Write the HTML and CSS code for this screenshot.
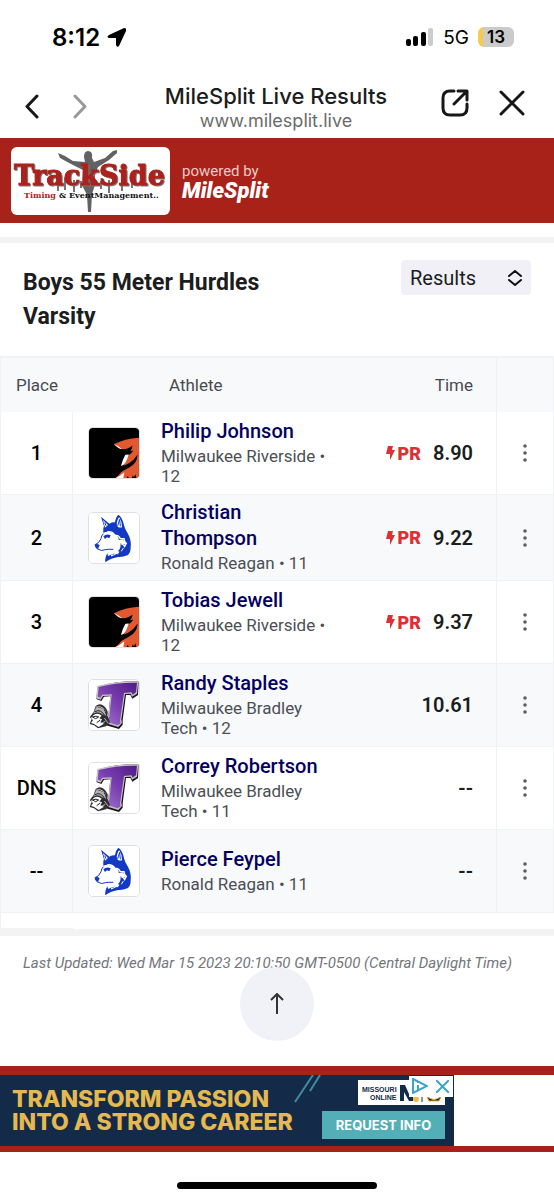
FILE: index.html
```html
<!DOCTYPE html>
<html lang="en">
<head>
    <meta charset="UTF-8">
    <meta name="viewport" content="width=device-width, initial-scale=1.0">
    <title>MileSplit Live Results</title>
    <link rel="stylesheet" href="styles.css">
</head>
<body>
    <!-- Shared logos and icons -->
    <svg class="sprite" aria-hidden="true">
        <defs>
            <linearGradient id="purple" x1="1" y1="0" x2="0" y2="1">
                <stop offset="0" stop-color="#4f1b84"/>
                <stop offset="0.5" stop-color="#7a3db0"/>
                <stop offset="1" stop-color="#a67bd0"/>
            </linearGradient>
        </defs>
        <symbol id="riverside" viewBox="0 0 147 147">
            <rect width="147" height="147" fill="#000"/>
            <path d="M73 48Q105 31 147 29V147H78Q98 133 105 104L112 82Q126 76 130 66Q105 75 73 48Z" fill="#e2582f"/>
            <path d="M73 48Q88 52 100 65Q86 61 73 48ZM94 112Q99 92 107 79L117 78Q111 96 106 104Q102 111 94 112ZM78 147Q92 141 104 130L101 147Z" fill="#fff"/>
            <path d="M83 61Q107 67 128 52Q126 73 99 82ZM82 116Q122 111 143 78Q142 105 117 117Q93 129 78 142ZM110 147l4-6 3 6zM126 147l3-8 3 6 5-9 2 11z" fill="#000"/>
        </symbol>
        <symbol id="reagan" viewBox="0 0 150 150">
            <rect width="150" height="150" fill="#fff"/>
            <path d="M36 11L61 32Q70 27 78 28Q80 12 89 5Q102 17 105 37Q108 50 116 61Q128 82 125 103Q125 119 117 126Q101 133 88 132Q67 135 49 148Q47 132 56 120Q54 132 63 126Q73 120 86 124Q96 112 86 115Q97 106 94 90Q106 98 113 92Q106 90 102 79L89 81Q91 71 80 66Q64 51 43 59Q42 44 45 40Z" fill="#1238c4"/>
            <path d="M42 21L57 36L48 44ZM83 32Q86 16 91 13Q99 25 99 43Q93 45 86 41Z" fill="#fff"/>
            <path d="M86 38L92 19L94 40M47 29L51 38" fill="none" stroke="#1238c4" stroke-width="3"/>
            <path d="M43 62Q37 68 36 77Q30 92 18 95Q19 104 26 108Q38 116 49 110Q58 108 73 109" fill="none" stroke="#1238c4" stroke-width="3"/>
            <path d="M18 94Q26 91 32 97L27 108Q19 107 18 94ZM43 70Q53 61 65 67L61 76L54 73L48 78Z" fill="#1238c4"/>
            <path d="M55 56Q71 54 79 68Q88 64 94 77L105 77Q106 88 112 91L107 101Q101 91 95 93M64 63Q78 68 76 78" fill="none" stroke="#fff" stroke-width="4"/>
            <path d="M59 127L72 118L67 129L83 121M103 105L97 115" fill="none" stroke="#fff" stroke-width="3"/>
        </symbol>
        <symbol id="bradley" viewBox="0 0 150 150">
            <rect width="150" height="150" fill="#fff"/>
            <path d="M26 20Q80 3 149 4L147 45L130 56L124 45L111 45L101 121L101 134L90 147L46 134L51 118L58 107L64 49L45 50L37 63L22 57Z" fill="#171419"/>
            <path d="M25 18Q80 2 148 4L144 41L129 50L125 41L108 42L97 119L99 129L88 141L48 129L52 116L58 107L64 47L42 48L35 59L21 55Z" fill="#c4c1c7"/>
            <path d="M29 21Q82 7 144 8L141 37L131 44L127 37L105 39L93 122L95 130L86 136L52 125L61 110L68 43L40 44L34 53L26 50Z" fill="url(#purple)"/>
            <path d="M20 78Q33 67 45 78Q60 92 55 106L63 126L51 139L27 145L15 136L2 132L8 116L2 112L14 96L17 86Z" fill="#323236"/>
            <path d="M20 85Q34 73 46 87Q55 96 49 109L34 99Q21 93 14 101Z" fill="#b3b3b5"/>
            <path d="M14 105Q26 97 38 107L31 115L39 118L34 127L45 131L29 141L14 131L6 129L12 121L6 114Z" fill="#fff"/>
            <path d="M18 95Q35 85 48 108M27 81Q48 82 52 104M10 111Q22 106 29 111L20 116ZM39 112L50 130M43 106L54 128M23 128L34 120" fill="none" stroke="#222" stroke-width="3"/>
            <path d="M20 82Q35 76 45 89M46 114L57 129M34 132L49 124" fill="none" stroke="#fff" stroke-width="2"/>
        </symbol>
        <symbol id="bolt" viewBox="0 0 9 14">
            <path d="M2 0H7L6 4H9L4 14L4 8H0Z" fill="#dc3035"/>
        </symbol>
        <symbol id="dots" viewBox="0 0 4 18">
            <circle cx="2" cy="2" r="1.8"/>
            <circle cx="2" cy="9" r="1.8"/>
            <circle cx="2" cy="16" r="1.8"/>
        </symbol>
    </svg>

    <div class="status-bar">
        <div class="clock">
            <span>8:12</span>
            <svg width="19" height="19" viewBox="0 0 19 19"><path d="M17 0Q20 0 19 3L12 18Q10 20 9 17V10H2Q-1 9 2 7Z"/></svg>
        </div>
        <div class="signals">
            <svg width="28" height="18" viewBox="0 0 28 18">
                <rect x="0" y="11" width="5" height="7" rx="2"/>
                <rect x="7" y="8" width="5" height="10" rx="2"/>
                <rect x="15" y="4" width="5" height="14" rx="2"/>
                <rect x="22" y="0" width="5" height="18" rx="2" fill="#ccc"/>
            </svg>
            <span class="network">5G</span>
            <span class="battery">13</span>
        </div>
    </div>

    <div class="browser-bar">
        <div class="bar-side">
            <button class="icon-button" aria-label="Back"><svg width="14" height="25" viewBox="0 0 14 25"><path d="M12 2L2 12.500L12 23"/></svg></button>
            <button class="icon-button forward" aria-label="Forward"><svg width="14" height="25" viewBox="0 0 14 25"><path d="M2 2L12 12.500L2 23"/></svg></button>
        </div>
        <div class="page-info">
            <div class="page-title">MileSplit Live Results</div>
            <div class="page-url">www.milesplit.live</div>
        </div>
        <div class="bar-side bar-right">
            <button class="icon-button" aria-label="Open in browser"><svg width="28" height="28" viewBox="0 0 28 28"><path d="M13 2H9Q2 2 2 9V19Q2 26 9 26H19Q26 26 26 19V15M17 2H26V11M25 3L13 15"/></svg></button>
            <button class="icon-button" aria-label="Close"><svg width="26" height="26" viewBox="0 0 26 26"><path d="M2 2L24 24M24 2L2 24"/></svg></button>
        </div>
    </div>

    <header class="site-header">
        <a class="timer-logo" href="#">
            <svg width="159" height="68" viewBox="0 0 159 68">
                <path d="M47 6L54 9L62 14L74 15L73 10Q73 4 77 4Q82 4 81 11L83 15L94 11L102 4L106 3L106 6L98 13L87 20L84 27L84 38L81 47L80 65H77L76 48L71 38L72 23L62 18L49 11Z" fill="#626262"/>
                <path d="M47 34V44M54 31V43M63 33V45M70 34V41M90 34V42M98 33V46M111 32V44M121 31V41" stroke="#747474" stroke-width="2"/>
                <text x="3" y="38" class="track-name">TrackSide</text>
                <text x="13" y="51" class="track-small track-red">Timing</text>
                <text x="48" y="51" class="track-small">&amp; EventManagement..</text>
            </svg>
        </a>
        <a class="powered" href="#">
            <span>powered by</span>
            <strong>MileSplit</strong>
        </a>
    </header>

    <main class="results">
        <div class="event-head">
            <h1>Boys 55 Meter Hurdles Varsity</h1>
            <div class="select-wrap">
                <select aria-label="View">
                    <option>Results</option>
                </select>
                <svg class="select-icon" width="14" height="16" viewBox="0 0 14 16"><path d="M1 6L7 1L13 6M1 10L7 15L13 10"/></svg>
            </div>
        </div>

        <table>
            <thead>
                <tr>
                    <th class="place">Place</th>
                    <th class="logo"></th>
                    <th class="athlete">Athlete</th>
                    <th class="time">Time</th>
                    <th class="menu"></th>
                </tr>
            </thead>
            <tbody>
                <tr>
                    <td class="place">1</td>
                    <td class="logo"><svg class="school-logo"><use href="#riverside"/></svg></td>
                    <td class="athlete"><a href="#">Philip Johnson</a><p>Milwaukee Riverside • 12</p></td>
                    <td class="time"><span class="pr"><svg width="9" height="14"><use href="#bolt"/></svg>PR</span>8.90</td>
                    <td class="menu"><button aria-label="More"><svg width="4" height="18"><use href="#dots"/></svg></button></td>
                </tr>
                <tr>
                    <td class="place">2</td>
                    <td class="logo"><svg class="school-logo"><use href="#reagan"/></svg></td>
                    <td class="athlete"><a href="#">Christian Thompson</a><p>Ronald Reagan • 11</p></td>
                    <td class="time"><span class="pr"><svg width="9" height="14"><use href="#bolt"/></svg>PR</span>9.22</td>
                    <td class="menu"><button aria-label="More"><svg width="4" height="18"><use href="#dots"/></svg></button></td>
                </tr>
                <tr>
                    <td class="place">3</td>
                    <td class="logo"><svg class="school-logo"><use href="#riverside"/></svg></td>
                    <td class="athlete"><a href="#">Tobias Jewell</a><p>Milwaukee Riverside • 12</p></td>
                    <td class="time"><span class="pr"><svg width="9" height="14"><use href="#bolt"/></svg>PR</span>9.37</td>
                    <td class="menu"><button aria-label="More"><svg width="4" height="18"><use href="#dots"/></svg></button></td>
                </tr>
                <tr>
                    <td class="place">4</td>
                    <td class="logo"><svg class="school-logo"><use href="#bradley"/></svg></td>
                    <td class="athlete"><a href="#">Randy Staples</a><p>Milwaukee Bradley Tech • 12</p></td>
                    <td class="time">10.61</td>
                    <td class="menu"><button aria-label="More"><svg width="4" height="18"><use href="#dots"/></svg></button></td>
                </tr>
                <tr>
                    <td class="place">DNS</td>
                    <td class="logo"><svg class="school-logo"><use href="#bradley"/></svg></td>
                    <td class="athlete"><a href="#">Correy Robertson</a><p>Milwaukee Bradley Tech • 11</p></td>
                    <td class="time">--</td>
                    <td class="menu"><button aria-label="More"><svg width="4" height="18"><use href="#dots"/></svg></button></td>
                </tr>
                <tr>
                    <td class="place">--</td>
                    <td class="logo"><svg class="school-logo"><use href="#reagan"/></svg></td>
                    <td class="athlete"><a href="#">Pierce Feypel</a><p>Ronald Reagan • 11</p></td>
                    <td class="time">--</td>
                    <td class="menu"><button aria-label="More"><svg width="4" height="18"><use href="#dots"/></svg></button></td>
                </tr>
            </tbody>
        </table>
        <div class="table-end"></div>
    </main>

    <div class="updated">
        <p>Last Updated: Wed Mar 15 2023 20:10:50 GMT-0500 (Central Daylight Time)</p>
        <button class="to-top" aria-label="Back to top"><svg width="14" height="22" viewBox="0 0 14 22"><path d="M7 21V1M1 7L7 1L13 7"/></svg></button>
    </div>

    <div class="ad-strip">
        <div class="ad-space">
            <div class="ad">
                <div class="ad-text">TRANSFORM PASSION<br>INTO A STRONG CAREER</div>
                <svg class="ad-lines" width="28" height="28" viewBox="0 0 28 28"><path d="M1 27L19 0M16 16L26 0"/></svg>
                <div class="ad-right">
                    <svg class="ad-logo" width="87" height="25" viewBox="0 0 87 25">
                        <rect width="87" height="25" fill="#fff"/>
                        <text x="4" y="12" class="mo-text">MISSOURI</text>
                        <text x="12" y="20" class="mo-text">ONLINE</text>
                        <path d="M42 5H47L51 14V5H55V21H51L46 12V21H42Z" fill="#132b49"/>
                        <circle cx="58" cy="19" r="3" fill="#edbd49"/>
                        <path d="M64 3V22" stroke="#132b49"/>
                        <path d="M68 15Q76 24 84 15L81 21H71Z" fill="#171717" stroke="#edbd49"/>
                    </svg>
                    <a class="ad-button" href="#">REQUEST INFO</a>
                </div>
                <div class="ad-choices">
                    <svg width="16" height="16" viewBox="0 0 16 16"><path d="M1 1L15 8L1 15ZM6 7V12M6 4V5"/></svg>
                    <button aria-label="Close ad"><svg width="13" height="13" viewBox="0 0 13 13"><path d="M0 0L13 13M13 0L0 13"/></svg></button>
                </div>
            </div>
        </div>
    </div>
    <div class="home-bar"></div>
</body>
</html>
```
FILE: styles.css
```css
* {
    box-sizing: border-box;
}
body {
    font-family: Roboto, Arial, sans-serif;
    margin: 0;
    color: #1b1d20;
    background-color: #fff;
}
button {
    font-family: inherit;
    padding: 0;
    border: none;
    background: none;
    cursor: pointer;
}
svg {
    display: block;
}
a {
    text-decoration: none;
}
.sprite {
    position: absolute;
    width: 0;
    height: 0;
}

/* Phone status bar */
.status-bar {
    display: flex;
    justify-content: space-between;
    align-items: center;
    height: 74px;
    padding: 0 40px 0 52px;
    font-family: Inter, sans-serif;
    color: #000;
}
.clock, .signals {
    display: flex;
    align-items: center;
}
.clock {
    gap: 7px;
    font-size: 24px;
    font-weight: 600;
}
.network {
    margin: 0 9px;
    font-size: 19px;
}
.battery {
    width: 36px;
    height: 20px;
    border-radius: 6px;
    background: linear-gradient(to right, #f4cc4b 5px, #cbcbcb 5px);
    font-size: 17px;
    font-weight: 600;
    line-height: 20px;
    text-align: center;
}

/* Browser bar */
.browser-bar {
    display: flex;
    justify-content: space-between;
    height: 64px;
    padding: 0 27px 0 25px;
    font-family: Inter, sans-serif;
}
.bar-side {
    display: flex;
    align-items: center;
    gap: 34px;
    width: 86px;
}
.bar-right {
    gap: 30px;
    padding-bottom: 6px;
}
.icon-button svg {
    fill: none;
    stroke: #171717;
    stroke-width: 3;
    stroke-linecap: round;
    stroke-linejoin: round;
}
.icon-button.forward svg {
    stroke: #999;
}
.page-info {
    padding-top: 8px;
    text-align: center;
}
.page-title {
    font-size: 22px;
    font-weight: 500;
    line-height: 28px;
}
.page-url {
    font-size: 18px;
    line-height: 22px;
    color: #6b6b6b;
}

/* Site header */
.site-header {
    display: flex;
    align-items: center;
    gap: 12px;
    height: 85px;
    padding-left: 11px;
    background-color: #a82219;
}
.timer-logo {
    border-radius: 6px;
    background-color: #fff;
}
.track-name {
    font-family: "DejaVu Serif", serif;
    font-size: 27px;
    font-weight: bold;
    fill: #ad211c;
    stroke: #ad211c;
    filter: drop-shadow(1px 1px 0 #777);
}
.track-small {
    font-family: "DejaVu Serif", serif;
    font-size: 8px;
    font-weight: bold;
    fill: #111;
}
.track-red {
    fill: #ad211c;
}
.powered {
    display: flex;
    flex-direction: column;
    padding-top: 2px;
    color: #fff;
}
.powered span {
    font-size: 15px;
    line-height: 18px;
    color: #ecc8c5;
}
.powered strong {
    font-size: 22px;
    font-style: italic;
    font-weight: 900;
    line-height: 22px;
}

/* Results */
.results {
    margin-top: 14px;
    border-top: 6px solid #f3f2f4;
    border-bottom: 7px solid #f3f3f4;
}
.event-head {
    display: flex;
    justify-content: space-between;
    align-items: flex-start;
    padding: 17px 23px 22px;
}
.event-head h1 {
    max-width: 260px;
    margin: 6px 0 0;
    font-size: 23px;
    font-weight: 700;
    line-height: 34px;
}
.select-wrap {
    position: relative;
}
.select-wrap select {
    width: 130px;
    height: 35px;
    padding: 0 9px;
    border: none;
    border-radius: 4px;
    background-color: #f0f0f6;
    font-family: inherit;
    font-size: 20px;
    color: #1b1d20;
    appearance: none;
}
.select-icon {
    position: absolute;
    top: 10px;
    right: 9px;
    fill: none;
    stroke: #111;
    stroke-width: 2;
    stroke-linecap: round;
    stroke-linejoin: round;
    pointer-events: none;
}
table {
    width: 100%;
    table-layout: fixed;
    border-collapse: separate;
    border-spacing: 0;
    border-top: 2px solid #f1f2f4;
    border-left: 1px solid #f1f2f4;
    border-right: 1px solid #f1f2f4;
}
th {
    height: 54px;
    padding: 0;
    background-color: #f8f9fb;
    font-size: 17px;
    font-weight: 400;
    text-align: left;
    color: #484b50;
}
td {
    padding: 0;
    border-bottom: 1px solid #f0f1f3;
}
tbody tr:nth-child(even) {
    background-color: #f8f9fb;
}
.place {
    width: 72px;
    text-align: center;
}
td.place {
    border-right: 1px solid #f0f1f3;
    font-size: 20px;
    font-weight: 500;
    color: #000;
}
.logo {
    width: 88px;
}
td.logo {
    padding: 15px 0 15px 15px;
}
.school-logo {
    width: 52px;
    height: 52px;
    border: 1px solid #dfe0e3;
    border-radius: 5px;
}
th.athlete {
    padding-left: 8px;
}
td.athlete {
    padding: 4px 0 7px;
}
.athlete a {
    display: block;
    margin-bottom: 2px;
    font-size: 20px;
    font-weight: 500;
    line-height: 26px;
    color: #03005f;
}
.athlete p {
    margin: 0;
    font-size: 17px;
    line-height: 20px;
    color: #4c4f55;
}
.time {
    width: 160px;
    padding-right: 23px;
    text-align: right;
}
td.time {
    font-size: 20px;
    font-weight: 600;
}
.pr {
    display: inline-flex;
    align-items: center;
    gap: 3px;
    margin-right: 12px;
    font-size: 18px;
    font-weight: 900;
    color: #dc3035;
}
.menu {
    width: 57px;
    border-left: 1px solid #f0f1f3;
}
.menu button {
    display: block;
    margin: 0 auto;
    fill: #5b5d61;
}
.table-end {
    width: 73px;
    height: 16px;
    border-left: 1px solid #f1f2f4;
    border-bottom: 1px solid #f1f2f4;
}

/* Footer */
.updated {
    position: relative;
    height: 130px;
    padding: 17px 23px;
}
.updated p {
    margin: 0;
    font-size: 15px;
    font-style: italic;
    line-height: 20px;
    color: #73767b;
}
.to-top {
    position: absolute;
    top: 31px;
    left: calc(50% - 37px);
    display: flex;
    justify-content: center;
    align-items: center;
    width: 74px;
    height: 74px;
    border-radius: 50%;
    background-color: #f1f1f8;
}
.to-top svg {
    fill: none;
    stroke: #333;
    stroke-width: 2;
}
.ad-strip {
    padding: 9px 0 6px;
    background-color: #a82219;
}
.ad-space {
    background-color: #fff;
}
.ad {
    position: relative;
    display: flex;
    justify-content: space-between;
    width: 454px;
    height: 71px;
    padding: 5px 9px 5px 12px;
    background-color: #132b49;
}
.ad-text {
    padding-top: 8px;
    font-family: Inter, sans-serif;
    font-size: 23px;
    font-weight: 800;
    line-height: 23px;
    white-space: nowrap;
    color: #e5b94f;
}
.ad-lines {
    position: absolute;
    top: 0;
    left: 294px;
    fill: none;
    stroke: #428b9f;
    stroke-width: 2;
}
.ad-right {
    display: flex;
    flex-direction: column;
    align-items: flex-end;
    gap: 6px;
}
.mo-text {
    font-family: "Liberation Sans", sans-serif;
    font-size: 7px;
    font-weight: bold;
    fill: #132b49;
}
.ad-button {
    width: 123px;
    height: 28px;
    background-color: #52afb8;
    font-family: Inter, sans-serif;
    font-size: 13px;
    font-weight: 700;
    line-height: 28px;
    text-align: center;
    color: #fff;
}
.ad-choices {
    position: absolute;
    top: 1px;
    right: 1px;
    display: flex;
    align-items: center;
    gap: 8px;
    padding: 2px 4px 3px 3px;
    background-color: #fff;
}
.ad-choices svg {
    fill: none;
    stroke: #3aa5c9;
    stroke-width: 2;
}
.home-bar {
    width: 36%;
    height: 7px;
    margin: 30px auto 11px;
    border-radius: 4px;
    background-color: #000;
}
```
